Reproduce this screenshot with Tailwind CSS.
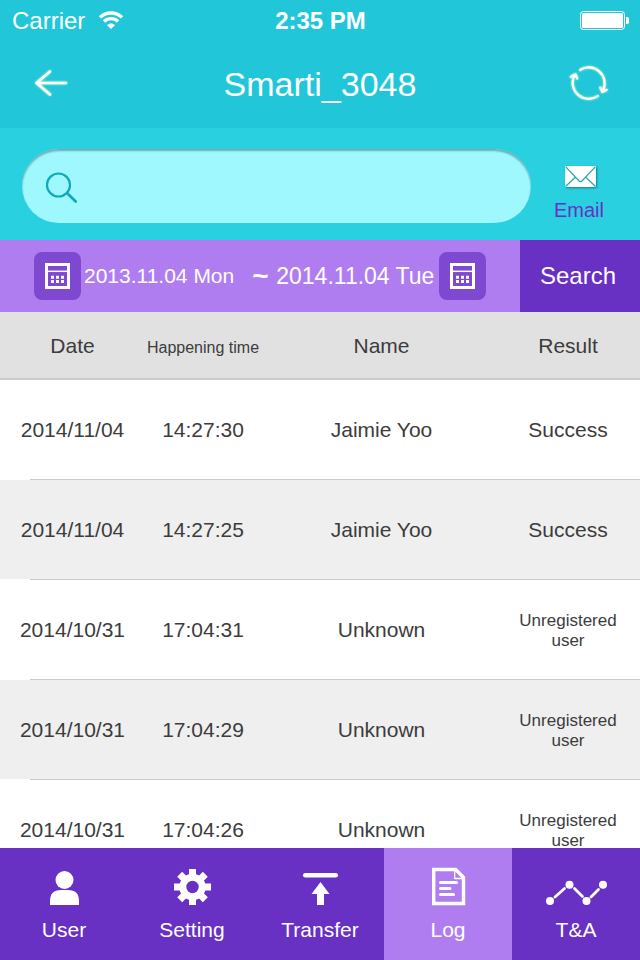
<!DOCTYPE html>
<html lang="en">
<head>
<meta charset="utf-8">
<meta name="viewport" content="width=device-width, initial-scale=1">
<title>Smarti_3048</title>
<script src="https://cdn.jsdelivr.net/npm/@tailwindcss/browser@4"></script>
</head>
<body class="flex h-screen flex-col overflow-hidden bg-white font-['Liberation_Sans',Arial,sans-serif] text-[21px] leading-6 text-[#3c3c3c]">

<header class="shrink-0 bg-[#21c6d9] text-white">
  <div class="grid h-10 grid-cols-3 items-center pt-0.5 pr-[11px] pl-3 text-2xl leading-8">
    <div class="flex items-center gap-3.5">
      <span>Carrier</span>
      <svg class="mb-0.5 h-[18px] w-6" viewBox="0 0 24 18" fill="none" stroke="#fff" stroke-width="3.300" aria-label="Wi-Fi">
        <path d="M1 6.400C7 .500 17 .500 23 6.400"/>
        <path d="M5 10.500C9 6.700 15 6.700 19 10.500"/>
        <path d="M12 18 8 14.200c2.300-2.200 5.700-2.200 8 0z" fill="#fff" stroke="none"/>
      </svg>
    </div>
    <span class="text-center font-bold">2:35 PM</span>
    <svg class="mb-0.5 h-[19px] w-[49px] justify-self-end" viewBox="0 0 49 19" fill="#fff" aria-label="Battery full">
      <rect x=".5" y=".5" width="44" height="18" rx="3" fill="none" stroke="#fff"/>
      <rect x="2" y="2" width="41" height="15" rx="1.500"/>
      <path d="M46 6h.5a2 2 0 0 1 2.500 2v3a2 2 0 0 1-2.500 2H46z"/>
    </svg>
  </div>
  <div class="grid h-[88px] grid-cols-[auto_1fr_auto] items-center px-[30px]">
    <button type="button" aria-label="Back" class="flex h-11 w-11 items-center">
      <svg class="h-10 w-11 drop-shadow-[0_0_1px_#cfffc0]" viewBox="0 0 44 40" fill="none" stroke="#fff" stroke-width="2.600" stroke-linecap="round" stroke-linejoin="round"><path d="M20 7.500 6.500 19 20 30.500M7 19h29"/></svg>
    </button>
    <h1 class="text-center text-[34px] leading-10">Smarti_3048</h1>
    <button type="button" aria-label="Refresh" class="flex h-11 w-11 items-center justify-center">
      <svg class="h-11 w-11 drop-shadow-[0_0_1px_#cfffc0]" viewBox="0 0 44 44" fill="none" stroke="#fff" stroke-width="2.200" stroke-linecap="round" stroke-linejoin="round">
        <path d="M14 8A16 16 0 0 1 37.500 27.500"/><path d="m34.300 25.500 2 4.500 4.500-2.200"/>
        <path d="M32 33.800A16 16 0 0 1 8.200 14"/><path d="m4.800 14.800 4.700-2.600 1.800 4.300"/>
      </svg>
    </button>
  </div>
</header>

<form class="shrink-0">
  <div class="flex h-28 items-center bg-[#29d1e0] pr-[13px] pl-[22px]">
    <label class="mt-1 flex h-[74px] flex-1 items-center rounded-full bg-[#a0f8ff] pl-[22px] inset-shadow-[0_2px_2px_#6fa9b1]">
      <svg class="mt-1 h-9 w-9 shrink-0" viewBox="0 0 36 36" fill="none" stroke="#0fa9b9" stroke-width="2.200" stroke-linecap="round"><circle cx="14.500" cy="15" r="11.500"/><path d="m23.500 23.500 8.200 8" stroke-width="2.800"/></svg>
      <input type="search" aria-label="Search log" class="h-full min-w-0 flex-1 bg-transparent px-3 outline-none">
    </label>
    <button type="button" class="mt-5 flex w-24 flex-col items-center gap-2.5 text-xl leading-6 text-[#6830c3]">
      <svg class="ml-1 h-[22px] w-8 drop-shadow-[1px_1px_1px_#00000066]" viewBox="0 0 32 22" fill="none" stroke="#26a5b4" stroke-width="1.200"><path d="M0 0h31v21H0z" fill="#fff" stroke="none"/><path d="m.5.700 13.300 14q1.700 1.600 3.400 0L30.500.700M.5 20.500 10.500 11M30.500 20.500 20.500 11"/></svg>
      Email
    </button>
  </div>
  <div class="flex h-[72px] text-white">
    <div class="flex flex-1 items-center bg-[#b07df1] pl-[34px]">
      <button type="button" class="flex items-center gap-[3px]">
        <svg class="h-12 w-[47px]" viewBox="0 0 47 48" fill="none" stroke="#fff"><rect width="47" height="48" rx="8" fill="#7e49d0" stroke="none"/><path d="M12.500 12.500h22v23h-22z" stroke-width="3"/><path d="M13 19.300h21" stroke-width="1.500"/><path d="M17 25.200h13M17 29.500h13" stroke-width="3" stroke-dasharray="3 2"/></svg>
        2013.11.04 Mon
      </button>
      <span class="ml-[18px] w-6 text-[28px] font-bold">~</span>
      <button type="button" class="flex items-center gap-[5px] text-[23px]">
        2014.11.04 Tue
        <svg class="h-12 w-[47px]" viewBox="0 0 47 48" fill="none" stroke="#fff"><rect width="47" height="48" rx="8" fill="#7e49d0" stroke="none"/><path d="M12.500 12.500h22v23h-22z" stroke-width="3"/><path d="M13 19.300h21" stroke-width="1.500"/><path d="M17 25.200h13M17 29.500h13" stroke-width="3" stroke-dasharray="3 2"/></svg>
      </button>
    </div>
    <button type="submit" class="w-[120px] bg-[#6830c3] px-5 text-left text-2xl">Search</button>
  </div>
</form>

<main class="min-h-0 flex-1 overflow-y-auto [scrollbar-width:none]">
  <table class="w-full table-fixed border-separate border-spacing-0 text-center">
    <colgroup><col class="w-[145px]"><col class="w-[116px]"><col><col class="w-[138px]"></colgroup>
    <thead class="bg-[#e1e1e1]">
      <tr class="h-[68px] *:border-b-2 *:border-[#cdcdcd] *:p-0 *:pt-0.5 *:font-normal">
        <th scope="col">Date</th><th scope="col"><div class="pt-1 text-base">Happening time</div></th><th scope="col">Name</th><th scope="col"><div class="pr-1.5">Result</div></th>
      </tr>
    </thead>
    <tbody class="*:h-[100px] *:bg-[linear-gradient(to_right,#fff_30px,#cbcbcb_30px)] *:bg-[length:100%_1px] *:bg-bottom *:bg-no-repeat *:even:bg-[#efefef]">
      <tr><td>2014/11/04</td><td>14:27:30</td><td>Jaimie Yoo</td><td class="pr-1.5">Success</td></tr>
      <tr><td>2014/11/04</td><td>14:27:25</td><td>Jaimie Yoo</td><td class="pr-1.5">Success</td></tr>
      <tr><td>2014/10/31</td><td>17:04:31</td><td>Unknown</td><td class="pt-0.5 pr-1.5 text-[17px] leading-5">Unregistered<br>user</td></tr>
      <tr><td>2014/10/31</td><td>17:04:29</td><td>Unknown</td><td class="pt-0.5 pr-1.5 text-[17px] leading-5">Unregistered<br>user</td></tr>
      <tr><td>2014/10/31</td><td>17:04:26</td><td>Unknown</td><td class="pt-0.5 pr-1.5 text-[17px] leading-5">Unregistered<br>user</td></tr>
    </tbody>
  </table>
</main>

<nav class="grid h-28 shrink-0 grid-cols-5 bg-[#6830c3] text-white *:flex *:flex-col *:items-center *:gap-2 *:pt-[18px]">
  <a href="#user">
    <svg class="h-11 w-16" viewBox="0 0 64 44" fill="#fff"><circle cx="32.500" cy="14" r="9"/><path d="M18 39v-4q0-11 11-11h7q11 0 11 11v4z"/><path d="M26 23.500h13" stroke="#6830c3" stroke-width=".6"/></svg>
    <span>User</span>
  </a>
  <a href="#setting">
    <svg class="h-11 w-16" viewBox="0 0 64 44" fill="none" stroke="#fff"><circle cx="32.500" cy="21" r="9.700" stroke-width="7"/><path d="M32.500 10V3M32.500 39v-7M21.500 21H14M51 21h-7.500M24.700 13.200l-5-5M45.300 33.800l-5-5M40.300 13.200l5-5M19.700 33.800l5-5" stroke-width="7"/></svg>
    <span>Setting</span>
  </a>
  <a href="#transfer">
    <svg class="h-11 w-16" viewBox="0 0 64 44" fill="#fff"><rect x="15" y="7" width="35" height="4.500" rx="2.200"/><path d="m32.500 16 9 12H36v11h-7V28h-5.500z"/></svg>
    <span>Transfer</span>
  </a>
  <a href="#log" aria-current="page" class="bg-[#b07df1]">
    <svg class="h-11 w-16" viewBox="0 0 64 44" fill="none" stroke="#fff"><path d="M17.700 3.500h22l7.800 8v26H17.700z" stroke-width="3.400"/><path d="M38.700 4v8.500h8.500" stroke-width="1.300"/><path d="M24.500 16.500h16M24.500 22.500h9.500M24.500 28.500h13" stroke-width="3" stroke-linecap="round"/></svg>
    <span>Log</span>
  </a>
  <a href="#ta">
    <svg class="h-11 w-16" viewBox="0 0 64 44" fill="#fff" stroke="#fff"><g stroke="none"><circle cx="6" cy="35" r="4"/><circle cx="25.500" cy="18.700" r="4"/><circle cx="42.500" cy="35" r="4"/><circle cx="59" cy="18.700" r="4"/></g><path d="m11 31 9.500-8.500M30.500 22.500l8 8M47 31l7.500-7.500" stroke-width="2.800" stroke-linecap="round"/></svg>
    <span>T&amp;A</span>
  </a>
</nav>
</body>
</html>
